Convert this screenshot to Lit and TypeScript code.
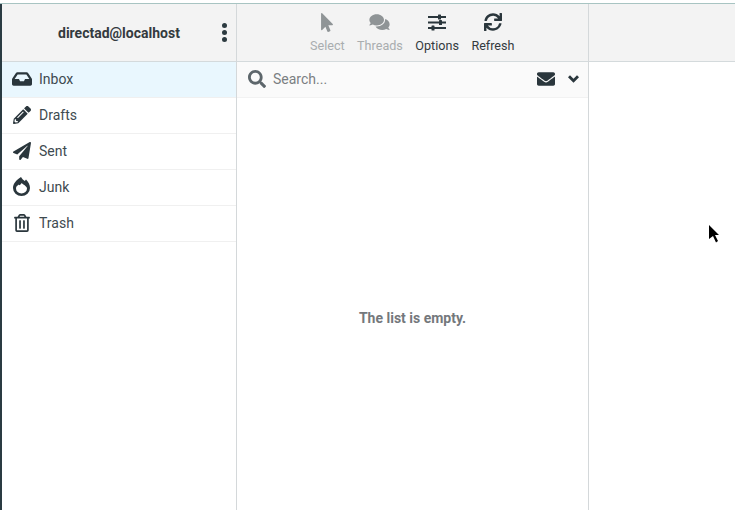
import { LitElement, html, css, svg } from "lit";
import { customElement } from "lit/decorators.js";

const P = {
  inbox: "M567.938 243.908L462.25 85.374A48.003 48.003 0 0 0 422.311 64H153.689a48 48 0 0 0-39.938 21.374L8.062 243.908A47.994 47.994 0 0 0 0 270.533V400c0 26.51 21.49 48 48 48h480c26.51 0 48-21.49 48-48V270.533a47.994 47.994 0 0 0-8.062-26.625zM162.252 128h251.497l85.333 128H376l-32 64H232l-32-64H76.918l85.334-128z",
  pencil: "M497.9 142.1l-46.1 46.1c-4.7 4.7-12.3 4.7-17 0l-111-111c-4.7-4.7-4.7-12.3 0-17l46.1-46.1c18.7-18.7 49.1-18.7 67.9 0l60.1 60.1c18.8 18.7 18.8 49.1 0 67.9zM284.2 99.8L21.6 362.4.4 483.9c-2.9 16.4 11.4 30.6 27.8 27.8l121.5-21.3 262.6-262.6c4.7-4.7 4.7-12.3 0-17l-111-111c-4.8-4.7-12.4-4.7-17.1 0zM124.1 339.9c-5.5-5.5-5.5-14.3 0-19.8l154-154c5.5-5.5 14.3-5.5 19.8 0s5.5 14.3 0 19.8l-154 154c-5.5 5.5-14.3 5.5-19.8 0zM88 424h48v36.3l-64.5 11.3-31.1-31.1L51.7 376H88v48z",
  plane: "M476 3.2L12.5 270.6c-18.1 10.4-15.8 35.6 2.2 43.2L121 358.4l287.3-253.2c5.5-4.9 13.3 2.6 8.6 8.3L176 407v80.5c0 23.6 28.5 32.9 42.5 15.8L282 426l124.6 52.2c14.2 6 30.4-2.9 33-18.2l72-432C515 7.8 493.3-6.8 476 3.2z",
  trash: "M268 416h24a12 12 0 0 0 12-12V188a12 12 0 0 0-12-12h-24a12 12 0 0 0-12 12v216a12 12 0 0 0 12 12zM432 80h-82.41l-34-56.7A48 48 0 0 0 274.41 0H173.59a48 48 0 0 0-41.16 23.3L98.41 80H16A16 16 0 0 0 0 96v16a16 16 0 0 0 16 16h16v336a48 48 0 0 0 48 48h288a48 48 0 0 0 48-48V128h16a16 16 0 0 0 16-16V96a16 16 0 0 0-16-16zM171.84 50.91A6 6 0 0 1 177 48h94a6 6 0 0 1 5.15 2.91L293.61 80H154.39zM368 464H80V128h288zm-212-48h24a12 12 0 0 0 12-12V188a12 12 0 0 0-12-12h-24a12 12 0 0 0-12 12v216a12 12 0 0 0 12 12z",
  search: "M505 442.7L405.3 343c-4.5-4.5-10.6-7-17-7H372c27.6-35.3 44-79.7 44-128C416 93.1 322.9 0 208 0S0 93.1 0 208s93.1 208 208 208c48.3 0 92.7-16.4 128-44v16.3c0 6.4 2.5 12.5 7 17l99.7 99.7c9.4 9.4 24.6 9.4 33.9 0l28.3-28.3c9.4-9.4 9.4-24.6.1-34zM208 336c-70.7 0-128-57.2-128-128 0-70.7 57.2-128 128-128 70.7 0 128 57.2 128 128 0 70.7-57.2 128-128 128z",
  envelope: "M502.3 190.8c3.9-3.1 9.7-.2 9.7 4.7V400c0 26.5-21.5 48-48 48H48c-26.5 0-48-21.5-48-48V195.6c0-5 5.7-7.8 9.7-4.7 22.4 17.4 52.1 39.5 154.1 113.6 21.1 15.4 56.7 47.8 92.2 47.6 35.7.3 72-32.8 92.3-47.6 102-74.1 131.6-96.3 154-113.7zM256 320c23.2.4 56.6-29.2 73.4-41.4 132.7-96.3 142.8-104.7 173.4-128.7 5.8-4.5 9.2-11.5 9.2-18.9v-19c0-26.5-21.5-48-48-48H48C21.5 64 0 85.5 0 112v19c0 7.4 3.4 14.3 9.2 18.9 30.6 23.9 40.7 32.4 173.4 128.7 16.8 12.2 50.2 41.8 73.4 41.4z",
  pointer: "M302.189 329.126H196.105l55.831 135.993c3.889 9.428-.555 19.999-9.444 23.999l-49.165 21.427c-9.165 4-19.443-.571-23.332-9.714l-53.053-129.136-86.664 89.138C18.729 472.71 0 463.554 0 447.977V18.299C0 1.899 19.921-6.096 30.277 5.443l284.412 292.542c11.472 11.179 3.007 31.141-12.5 31.141z",
  comments: "M416 192c0-88.4-93.1-160-208-160S0 103.6 0 192c0 34.3 14.1 65.9 38 92-13.4 30.2-35.5 54.2-35.8 54.5-2.2 2.3-2.8 5.7-1.5 8.7S4.8 352 8 352c36.6 0 66.9-12.3 88.7-25 32.2 15.7 70.3 25 111.3 25 114.9 0 208-71.6 208-160zm122 220c23.9-26 38-57.7 38-92 0-66.9-53.5-124.2-129.3-148.1.9 6.6 1.3 13.3 1.3 20.1 0 105.9-107.7 192-240 192-10.8 0-21.3-.8-31.7-1.9C207.8 439.6 281.8 480 368 480c41 0 79.1-9.2 111.3-25 21.8 12.7 52.1 25 88.7 25 3.2 0 6.1-1.9 7.3-4.8 1.3-2.9.7-6.3-1.5-8.7-.3-.3-22.4-24.2-35.8-54.5z",
  sync: "M440.65 12.57l4 82.77A247.16 247.16 0 0 0 255.83 8C134.73 8 33.91 94.92 12.29 209.82A12 12 0 0 0 24.09 224h49.05a12 12 0 0 0 11.67-9.26 175.91 175.91 0 0 1 317-56.94l-101.46-4.86a12 12 0 0 0-12.57 12v47.41a12 12 0 0 0 12 12H500a12 12 0 0 0 12-12V12a12 12 0 0 0-12-12h-47.37a12 12 0 0 0-11.98 12.57zM255.83 432a175.61 175.61 0 0 1-146-77.8l101.8 4.87a12 12 0 0 0 12.57-12v-47.4a12 12 0 0 0-12-12H12a12 12 0 0 0-12 12V500a12 12 0 0 0 12 12h47.35a12 12 0 0 0 12-12.6l-4.15-82.57A247.17 247.17 0 0 0 255.83 504c121.11 0 221.93-86.92 243.55-201.82a12 12 0 0 0-11.8-14.18h-49.05a12 12 0 0 0-11.67 9.26A175.86 175.86 0 0 1 255.83 432z",
};

const icon = (d: string, w: number, h: number, vw: number, vh = 512) => html`<svg
  class="ic" width=${w} height=${h} viewBox="0 0 ${vw} ${vh}" fill="currentColor">${svg`<path d=${d}></path>`}</svg>`;

const sliders = html`<svg class="ic" width="20" height="17" viewBox="0 0 20 17" fill="currentColor">
  <rect x="1" y="2" width="18" height="2"></rect><rect x="11" y="0.5" width="3" height="5" rx="0.6"></rect>
  <rect x="1" y="7.5" width="18" height="2"></rect><rect x="12" y="6" width="3" height="5" rx="0.6"></rect>
  <rect x="1" y="13" width="18" height="2"></rect><rect x="4.5" y="11.5" width="3" height="5" rx="0.6"></rect>
</svg>`;

const fire = html`<svg class="ic" width="17" height="19" viewBox="0 0 17 19" fill="currentColor" fill-rule="evenodd">
  <path d="M8 0C9 2 10.5 3 11.8 4L13 2.5C15.5 5 17 8 17 11A8.5 8 0 0 1 0 11C0 7 3 3 8 0ZM8.5 6C8 7.5 7 8 6 8.3L5.8 7.6C4 8.8 3 10 3 11.5A5.5 5 0 0 0 14 11.5C14 9.5 11 8 8.5 6Z"></path>
</svg>`;

const chevron = html`<svg class="ic" width="11" height="8" viewBox="0 0 11 8" fill="currentColor">
  <path d="M0 2.2L2 .2L5.5 3.7L9 .2L11 2.2L5.5 7.7Z"></path>
</svg>`;

const folders = [
  { name: "Inbox", icon: icon(P.inbox, 20, 18, 576), active: true },
  { name: "Drafts", icon: icon(P.pencil, 18, 18, 512) },
  { name: "Sent", icon: icon(P.plane, 18, 18, 512) },
  { name: "Junk", icon: fire },
  { name: "Trash", icon: icon(P.trash, 16, 18, 448) },
];

const tools = [
  { label: "Select", icon: icon(P.pointer, 12, 19, 320), off: true },
  { label: "Threads", icon: icon(P.comments, 21, 18, 576), off: true },
  { label: "Options", icon: sliders },
  { label: "Refresh", icon: icon(P.sync, 18, 18, 512) },
];

@customElement("app-root")
export class AppRoot extends LitElement {
  static styles = css`
    :host {
      display: flex;
      flex-direction: column;
      height: 510px;
      width: 735px;
      overflow: hidden;
      position: relative;
      background: #fff;
      font-family: Roboto, "Liberation Sans", sans-serif;
      font-size: 14px;
      color: #3e4a50;
    }
    .top { height: 3px; flex: none; background: #fff; border-bottom: 1px solid #a8c4c2; }
    .main { flex: 1; display: flex; min-height: 0; border-left: 2px solid #2a3b42; }
    .ic { display: block; flex: none; }
    .side { width: 234px; flex: none; border-right: 1px solid #d4d8da; display: flex; flex-direction: column; }
    .list { width: 351px; flex: none; border-right: 1px solid #d4d8da; display: flex; flex-direction: column; }
    .rest { flex: 1; display: flex; flex-direction: column; }
    .head { height: 57px; flex: none; background: #f3f3f3; border-bottom: 1px solid #d4dadc; }
    .account { display: flex; align-items: center; padding-left: 56px; font-weight: 700; color: #343a3e; }
    .account .name { width: 164px; }
    .dots { display: flex; flex-direction: column; gap: 2px; margin-top: -1px; }
    .dots i { display: block; width: 5px; height: 5px; border-radius: 50%; background: #2c3a40; }
    .folder {
      height: 35px; box-sizing: border-box; padding-bottom: 2px; flex: none;
      display: flex; align-items: center;
      color: #3e4a50;
    }
    .sep { height: 1px; flex: none; background: #f0f0f0; }
    .folder.active { background: #e9f7fe; }
    .fi { width: 37px; padding-left: 2px; box-sizing: border-box; display: flex; justify-content: center; color: #2a363c; }
    .tools { display: flex; padding-left: 73px; align-items: flex-start; }
    .tool { display: flex; flex-direction: column; align-items: center; color: #333a3e; margin-right: 12.5px; white-space: nowrap; font-size: 12.6px; }
    .tool .box { height: 26px; margin-top: 5px; display: flex; align-items: center; justify-content: center; color: #2a363c; }
    .tool .lb { margin-top: 3px; line-height: 16px; }
    .tool.off { color: #a9adaf; }
    .tool.off .box { color: #8f9496; }
    .search {
      height: 35px; flex: none; box-sizing: border-box; padding: 0 9px 2px 11px; background: #fafafa;
      display: flex; align-items: center; color: #7a7f82;
    }
    .search .q { color: #5d666b; margin-right: 7px; }
    .search .t { flex: 1; }
    .search .mail { color: #2a363c; margin-right: 13px; }
    .search .chev { color: #2a363c; }
    .line { height: 1px; flex: none; background: #f2f2f2; }
    .empty { flex: 1; display: flex; align-items: center; justify-content: center; font-weight: 700; color: #74787c; padding-top: 28px; }
    .cursor { position: absolute; left: 709px; top: 225px; }
  `;

  render() {
    return html`
      <div class="top"></div>
      <div class="main">
        <div class="side">
          <div class="head account">
            <div class="name">directad@localhost</div>
            <div class="dots"><i></i><i></i><i></i></div>
          </div>
          ${folders.map(
            (f) => html`<div class="folder ${f.active ? "active" : ""}"><div class="fi">${f.icon}</div>${f.name}</div><div class="sep"></div>`
          )}
        </div>
        <div class="list">
          <div class="head tools">
            ${tools.map(
              (t) => html`<div class="tool ${t.off ? "off" : ""}"><div class="box">${t.icon}</div><div class="lb">${t.label}</div></div>`
            )}
          </div>
          <div class="search">
            <span class="q">${icon(P.search, 18, 18, 512)}</span>
            <span class="t">Search...</span>
            <span class="mail">${icon(P.envelope, 18, 18, 512)}</span>
            <span class="chev">${chevron}</span>
          </div>
          <div class="line"></div>
          <div class="empty">The list is empty.</div>
        </div>
        <div class="rest"><div class="head"></div></div>
      </div>
      <svg class="cursor" width="11" height="18" viewBox="0 0 11 18" fill="#000">
        <path d="M0 0L10 10H6L9 16L7 17.5L4 11L0 14Z"></path>
      </svg>
    `;
  }
}
